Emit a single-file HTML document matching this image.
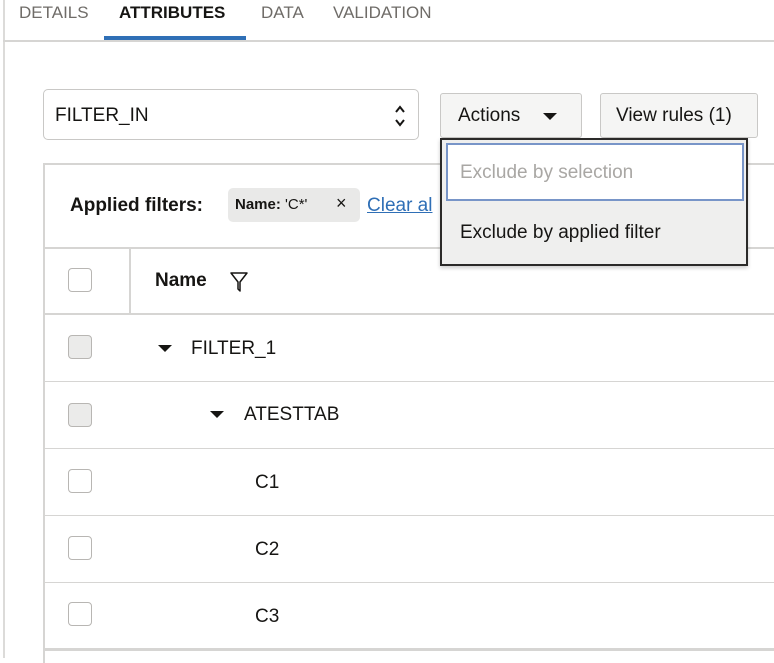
<!DOCTYPE html>
<html><head><style>
*{box-sizing:border-box;margin:0;padding:0}
body{width:774px;height:658px;overflow:hidden;background:#fff;font-family:"Liberation Sans",Arial,sans-serif;color:#161513;position:relative}
.a{position:absolute}
.tab{position:absolute;top:3px;font-size:17px;color:#6f6c68}
.cb{position:absolute;left:68px;width:24px;height:24px;border:1.5px solid #b8b6b3;border-radius:4px;background:#fff}
.cb.g{background:#ebebea}
.row{position:absolute;left:43px;right:0;height:1px;background:#d6d5d3}
.t{position:absolute;font-size:19px}
.tri{position:absolute;width:0;height:0;border-left:7px solid transparent;border-right:7px solid transparent;border-top:7px solid #161513}
</style></head><body>
<div class="a" style="left:3px;top:0;width:2px;height:658px;background:#dcdbd9"></div>
<div class="tab" style="left:19px">DETAILS</div>
<div class="tab" style="left:119px;color:#161513;font-weight:bold">ATTRIBUTES</div>
<div class="tab" style="left:261px">DATA</div>
<div class="tab" style="left:333px">VALIDATION</div>
<div class="a" style="left:104px;top:36px;width:142px;height:4px;background:#2f6fb6"></div>
<div class="a" style="left:3px;top:40px;width:771px;height:2px;background:#d6d5d3"></div>

<div class="a" style="left:43px;top:89px;width:376px;height:51px;border:1.5px solid #c9c8c6;border-radius:5px"></div>
<div class="t" style="left:55px;top:105px">FILTER_IN</div>
<svg class="a" style="left:393px;top:104px" width="14" height="24"><path d="M3 8 L7 3 L11 8 M3 16 L7 21 L11 16" stroke="#161513" stroke-width="2" fill="none"/></svg>

<div class="a" style="left:440px;top:93px;width:142px;height:45px;border:1.5px solid #c9c8c6;border-radius:3px;background:#f5f5f4"></div>
<div class="t" style="left:458px;top:105px">Actions</div>
<div class="tri" style="left:543px;top:113px"></div>
<div class="a" style="left:600px;top:93px;width:158px;height:45px;border:1.5px solid #c9c8c6;border-radius:3px;background:#f5f5f4"></div>
<div class="t" style="left:616px;top:105px">View rules (1)</div>

<div class="a" style="left:43px;top:163px;width:731px;height:500px;border-left:2px solid #d6d5d3;border-top:2px solid #d6d5d3"></div>
<div class="a" style="left:70px;top:195px;font-size:19px;font-weight:bold">Applied filters:</div>
<div class="a" style="left:228px;top:188px;width:132px;height:34px;background:#e9e9e8;border-radius:5px"></div>
<div class="a" style="left:235px;top:196px;font-size:15px"><b>Name:</b> 'C*'</div>
<div class="a" style="left:336px;top:193px;font-size:18px">×</div>
<div class="a" style="left:367px;top:195px;font-size:19px;color:#2f6fb6;text-decoration:underline">Clear al</div>

<div class="row" style="top:247px;height:2px"></div>
<div class="a" style="left:129px;top:248px;width:2px;height:66px;background:#d6d5d3"></div>
<div class="cb" style="top:268px"></div>
<div class="a" style="left:155px;top:270px;font-size:19px;font-weight:bold">Name</div>
<svg class="a" style="left:229px;top:271px" width="20" height="22"><path d="M2 2 H18 L11 11 V20 L9 18 V11 Z" stroke="#161513" stroke-width="1.5" fill="none" stroke-linejoin="round"/></svg>
<div class="row" style="top:313px;height:2px"></div>

<div class="cb g" style="top:335px"></div>
<div class="tri" style="left:158px;top:345px"></div>
<div class="t" style="left:191px;top:338px">FILTER_1</div>
<div class="row" style="top:381px"></div>
<div class="cb g" style="top:403px"></div>
<div class="tri" style="left:210px;top:411px"></div>
<div class="t" style="left:244px;top:404px">ATESTTAB</div>
<div class="row" style="top:448px"></div>
<div class="cb" style="top:469px"></div>
<div class="t" style="left:255px;top:472px">C1</div>
<div class="row" style="top:515px"></div>
<div class="cb" style="top:536px"></div>
<div class="t" style="left:255px;top:539px">C2</div>
<div class="row" style="top:582px"></div>
<div class="cb" style="top:602px"></div>
<div class="t" style="left:255px;top:606px">C3</div>
<div class="row" style="top:648px;height:3px"></div>

<div class="a" style="left:440px;top:138px;width:308px;height:128px;border:2px solid #2b2a29;background:#efefee;box-shadow:0 2px 4px rgba(0,0,0,.2)"></div>
<div class="a" style="left:446px;top:143px;width:298px;height:58px;border:2px solid #7895c8;background:#fff"></div>
<div class="t" style="left:460px;top:162px;color:#a9a7a4">Exclude by selection</div>
<div class="t" style="left:460px;top:222px">Exclude by applied filter</div>
</body></html>
